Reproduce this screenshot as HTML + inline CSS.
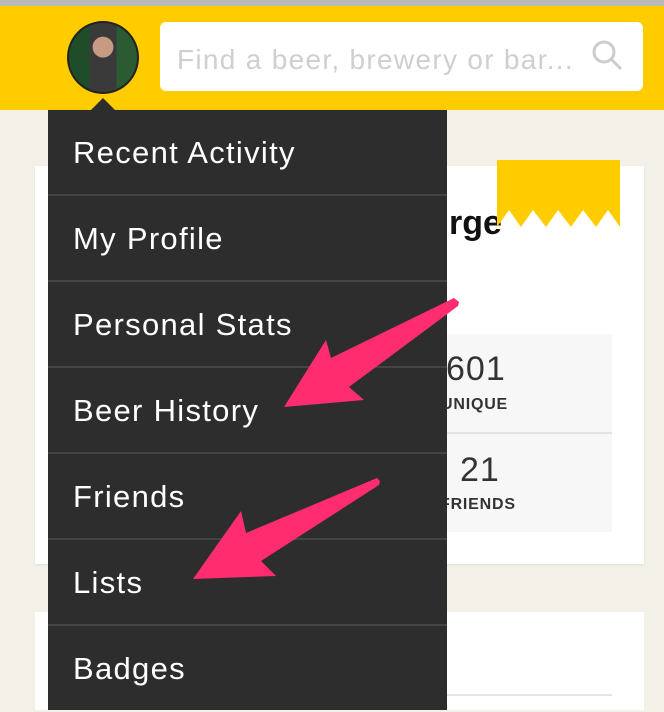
<!DOCTYPE html>
<html><head><style>
body{margin:0;width:664px;height:710px;overflow:hidden;background:#f3f1e7;font-family:"Liberation Sans",sans-serif;position:relative}
.abs{position:absolute}
.item{position:absolute;left:0;width:399px;border-bottom:2px solid #444;color:#fff;font-size:31px;letter-spacing:1.3px;line-height:86px;padding-left:25px;box-sizing:border-box;height:86px}
</style></head><body>
<div class="abs" style="left:0;top:0;width:664px;height:6px;background:#b9b9b9"></div>
<div class="abs" style="left:0;top:6px;width:664px;height:104px;background:#ffcc00"></div>
<div class="abs" style="left:67px;top:21px;width:72px;height:73px;border-radius:50%;background:radial-gradient(circle at 50% 35%,#c79a84 0 18%,transparent 19%),linear-gradient(90deg,#1f4d2a 0 30%,#3a3a3a 30% 70%,#2b5a33 70%);border:2px solid #222;box-sizing:border-box"></div>
<div class="abs" style="left:160px;top:22px;width:483px;height:69px;background:#fff;border-radius:6px"></div>
<div class="abs" style="left:177px;top:44px;font-size:28px;letter-spacing:1.3px;color:#cfcfcf">Find a beer, brewery or bar...</div>
<svg class="abs" style="left:588px;top:38px" width="40" height="40"><circle cx="16" cy="14" r="10" fill="none" stroke="#ccc" stroke-width="3"/><line x1="23" y1="21" x2="33" y2="31" stroke="#ccc" stroke-width="3"/></svg>
<div class="abs" style="left:35px;top:166px;width:609px;height:398px;background:#fff;box-shadow:0 1px 2px #ddd"></div>
<div class="abs" style="left:35px;top:612px;width:609px;height:98px;background:#fff"></div>
<div class="abs" style="left:447px;top:694px;width:165px;height:2px;background:#e5e5e5"></div>
<div class="abs" style="left:449px;top:204px;font-size:34px;font-weight:bold;color:#111">rge</div>
<svg class="abs" style="left:497px;top:160px" width="123" height="67"><polygon points="0,0 123,0 123,67 111,50 99,67 86,50 74,67 61,50 49,67 36,50 24,67 12,50 0,67" fill="#ffcc00"/></svg>
<div class="abs" style="left:447px;top:334px;width:165px;height:198px;background:#f7f7f7"></div>
<div class="abs" style="left:447px;top:432px;width:165px;height:2px;background:#e3e3e3"></div>
<div class="abs" style="left:446px;top:350px;font-size:34px;letter-spacing:1px;color:#333">601</div>
<div class="abs" style="left:441px;top:396px;font-size:16px;letter-spacing:0.8px;font-weight:bold;color:#333">UNIQUE</div>
<div class="abs" style="left:460px;top:451px;font-size:34px;letter-spacing:1px;color:#333">21</div>
<div class="abs" style="left:440px;top:496px;font-size:16px;letter-spacing:0.8px;font-weight:bold;color:#333">FRIENDS</div>
<div class="abs" style="left:48px;top:110px;width:399px;height:600px;background:#2d2d2d">
<div class="item" style="top:0">Recent Activity</div>
<div class="item" style="top:86px">My Profile</div>
<div class="item" style="top:172px">Personal Stats</div>
<div class="item" style="top:258px">Beer History</div>
<div class="item" style="top:344px">Friends</div>
<div class="item" style="top:430px">Lists</div>
<div class="item" style="top:516px;border:none">Badges</div>
</div>
<svg class="abs" style="left:88px;top:98px" width="30" height="13"><polygon points="15,0 28,13 2,13" fill="#2d2d2d"/></svg>
<svg class="abs" style="left:0;top:0" width="664" height="710"><g fill="#ff2d6f">
<polygon points="284,407 326,340 331,358 454,298 459,302 458,306 349,387 364,400"/>
<polygon points="193,579 241,511 246,533 377,478 380,481 379,485 261,561 276,576"/></g></svg>
</body></html>
